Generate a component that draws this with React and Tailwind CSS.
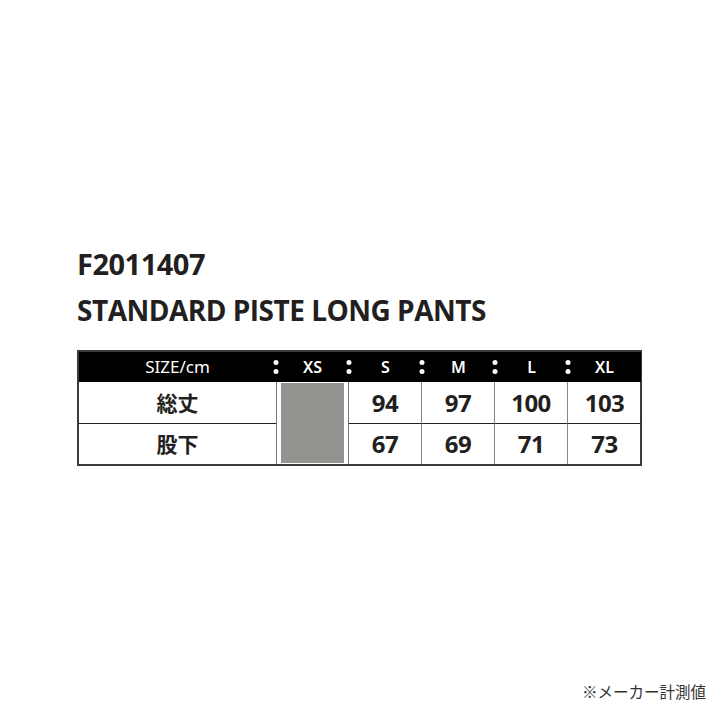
export default function App() {
  const sizes = ["S", "M", "L", "XL"];
  const rows = [
    { label: "総丈", vals: ["94", "97", "100", "103"] },
    { label: "股下", vals: ["67", "69", "71", "73"] },
  ];
  const Colon = () => (
    <span className="absolute left-0 top-1/2 -translate-x-1/2 -translate-y-1/2 flex flex-col gap-[4px]">
      <span className="block w-[5px] h-[5px] rounded-full bg-white"></span>
      <span className="block w-[5px] h-[5px] rounded-full bg-white"></span>
    </span>
  );
  return (
    <div className="w-[720px] h-[720px] bg-white relative" style={{ fontFamily: '"Open Sans", "Noto Sans CJK JP", sans-serif' }}>
      <div className="pt-[244px] pl-[77px]">
        <div className="text-[29px] font-bold text-[#231f20] leading-[40px] tracking-[-0.5px]">F2011407</div>
        <div className="mt-[6px] text-[28px] font-bold text-[#231f20] leading-[40px] tracking-[-0.5px]">STANDARD PISTE LONG PANTS</div>
        <div className="mt-[20px] w-[565px] border-2 border-[#3a3a3a] grid grid-cols-[197px_repeat(5,73px)] grid-rows-[30px_42px_40px]">
          <div className="bg-black text-white text-[17px] flex items-center justify-center" style={{ fontFamily: '"Noto Sans", sans-serif' }}>SIZE/cm</div>
          <div className="bg-black text-white text-[16px] font-semibold relative flex items-center justify-center" style={{ fontFamily: '"Noto Sans", sans-serif' }}>
            <Colon />XS
          </div>
          {sizes.map((s) => (
            <div key={s} className="bg-black text-white text-[16px] font-semibold relative flex items-center justify-center" style={{ fontFamily: '"Noto Sans", sans-serif' }}>
              <Colon />{s}
            </div>
          ))}
          <div className="flex items-center justify-center text-[21px] font-bold text-[#231f20] border-b border-[#222]" style={{ fontFamily: '"Noto Sans CJK JP", sans-serif' }}>総丈</div>
          <div className="row-span-2 border-x border-[#777] px-[4px] pt-[1px] pb-[1px]">
            <div className="w-full h-full bg-[#959390]"></div>
          </div>
          {rows[0].vals.map((v, i) => (
            <div key={i} className={"flex items-center justify-center text-[24px] font-bold text-[#231f20] border-b border-[#222] tracking-[-0.5px]" + (i < 3 ? " border-r border-r-[#888]" : "")}>{v}</div>
          ))}
          <div className="flex items-center justify-center text-[21px] font-bold text-[#231f20]" style={{ fontFamily: '"Noto Sans CJK JP", sans-serif' }}>股下</div>
          {rows[1].vals.map((v, i) => (
            <div key={i} className={"flex items-center justify-center text-[24px] font-bold text-[#231f20] tracking-[-0.5px]" + (i < 3 ? " border-r border-[#888]" : "")}>{v}</div>
          ))}
        </div>
      </div>
      <div className="absolute right-[14px] top-[680px] text-[15.5px] text-[#333]" style={{ fontFamily: '"Noto Sans CJK JP", sans-serif' }}>※メーカー計測値</div>
    </div>
  );
}
